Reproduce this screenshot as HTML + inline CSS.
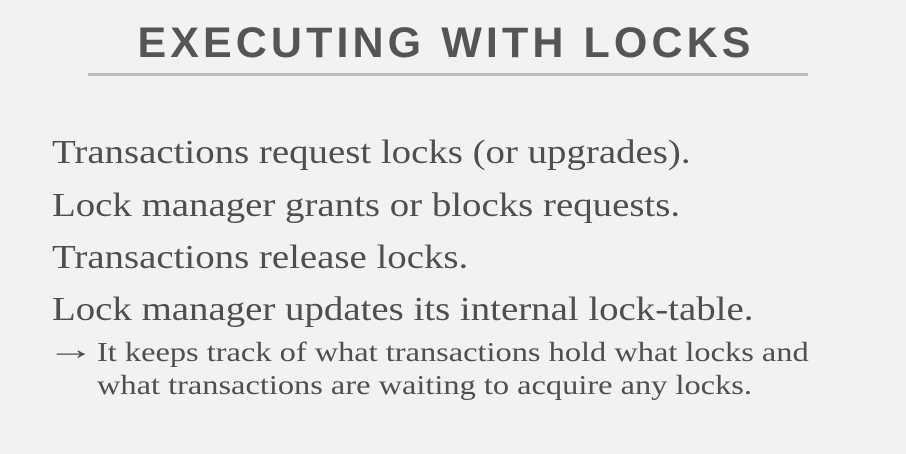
<!DOCTYPE html>
<html><head><style>
body{margin:0;width:906px;height:454px;background:#f2f2f2;overflow:hidden;position:relative;font-family:"Liberation Serif",serif;color:#4f4f4f}
.t{position:absolute;left:0;width:892px;text-align:center;top:17px;font:bold 43px/52px "Liberation Sans",sans-serif;letter-spacing:4.1px;color:#555}
.hr{position:absolute;left:88px;top:73px;width:720px;height:3px;background:#bdbdbd}
.l{position:absolute;left:52px;font-size:34px;line-height:40px;white-space:nowrap;transform:scaleX(1.143);transform-origin:0 0}
.s{position:absolute;left:97px;font-size:27px;line-height:32px;white-space:nowrap;transform:scaleX(1.2);transform-origin:0 0}
.a{position:absolute;left:47px;top:334px;font-size:30px;line-height:32px;transform:scaleX(1.6);transform-origin:0 0}
</style></head><body>
<div class="t">EXECUTING WITH LOCKS</div>
<div class="hr"></div>
<div class="l" style="top:133px">Transactions request locks (or upgrades).</div>
<div class="l" style="top:186px">Lock manager grants or blocks requests.</div>
<div class="l" style="top:238px">Transactions release locks.</div>
<div class="l" style="top:290px">Lock manager updates its internal lock-table.</div>
<div class="a">→</div>
<div class="s" style="top:336px">It keeps track of what transactions hold what locks and</div>
<div class="s" style="top:369px">what transactions are waiting to acquire any locks.</div>
</body></html>
